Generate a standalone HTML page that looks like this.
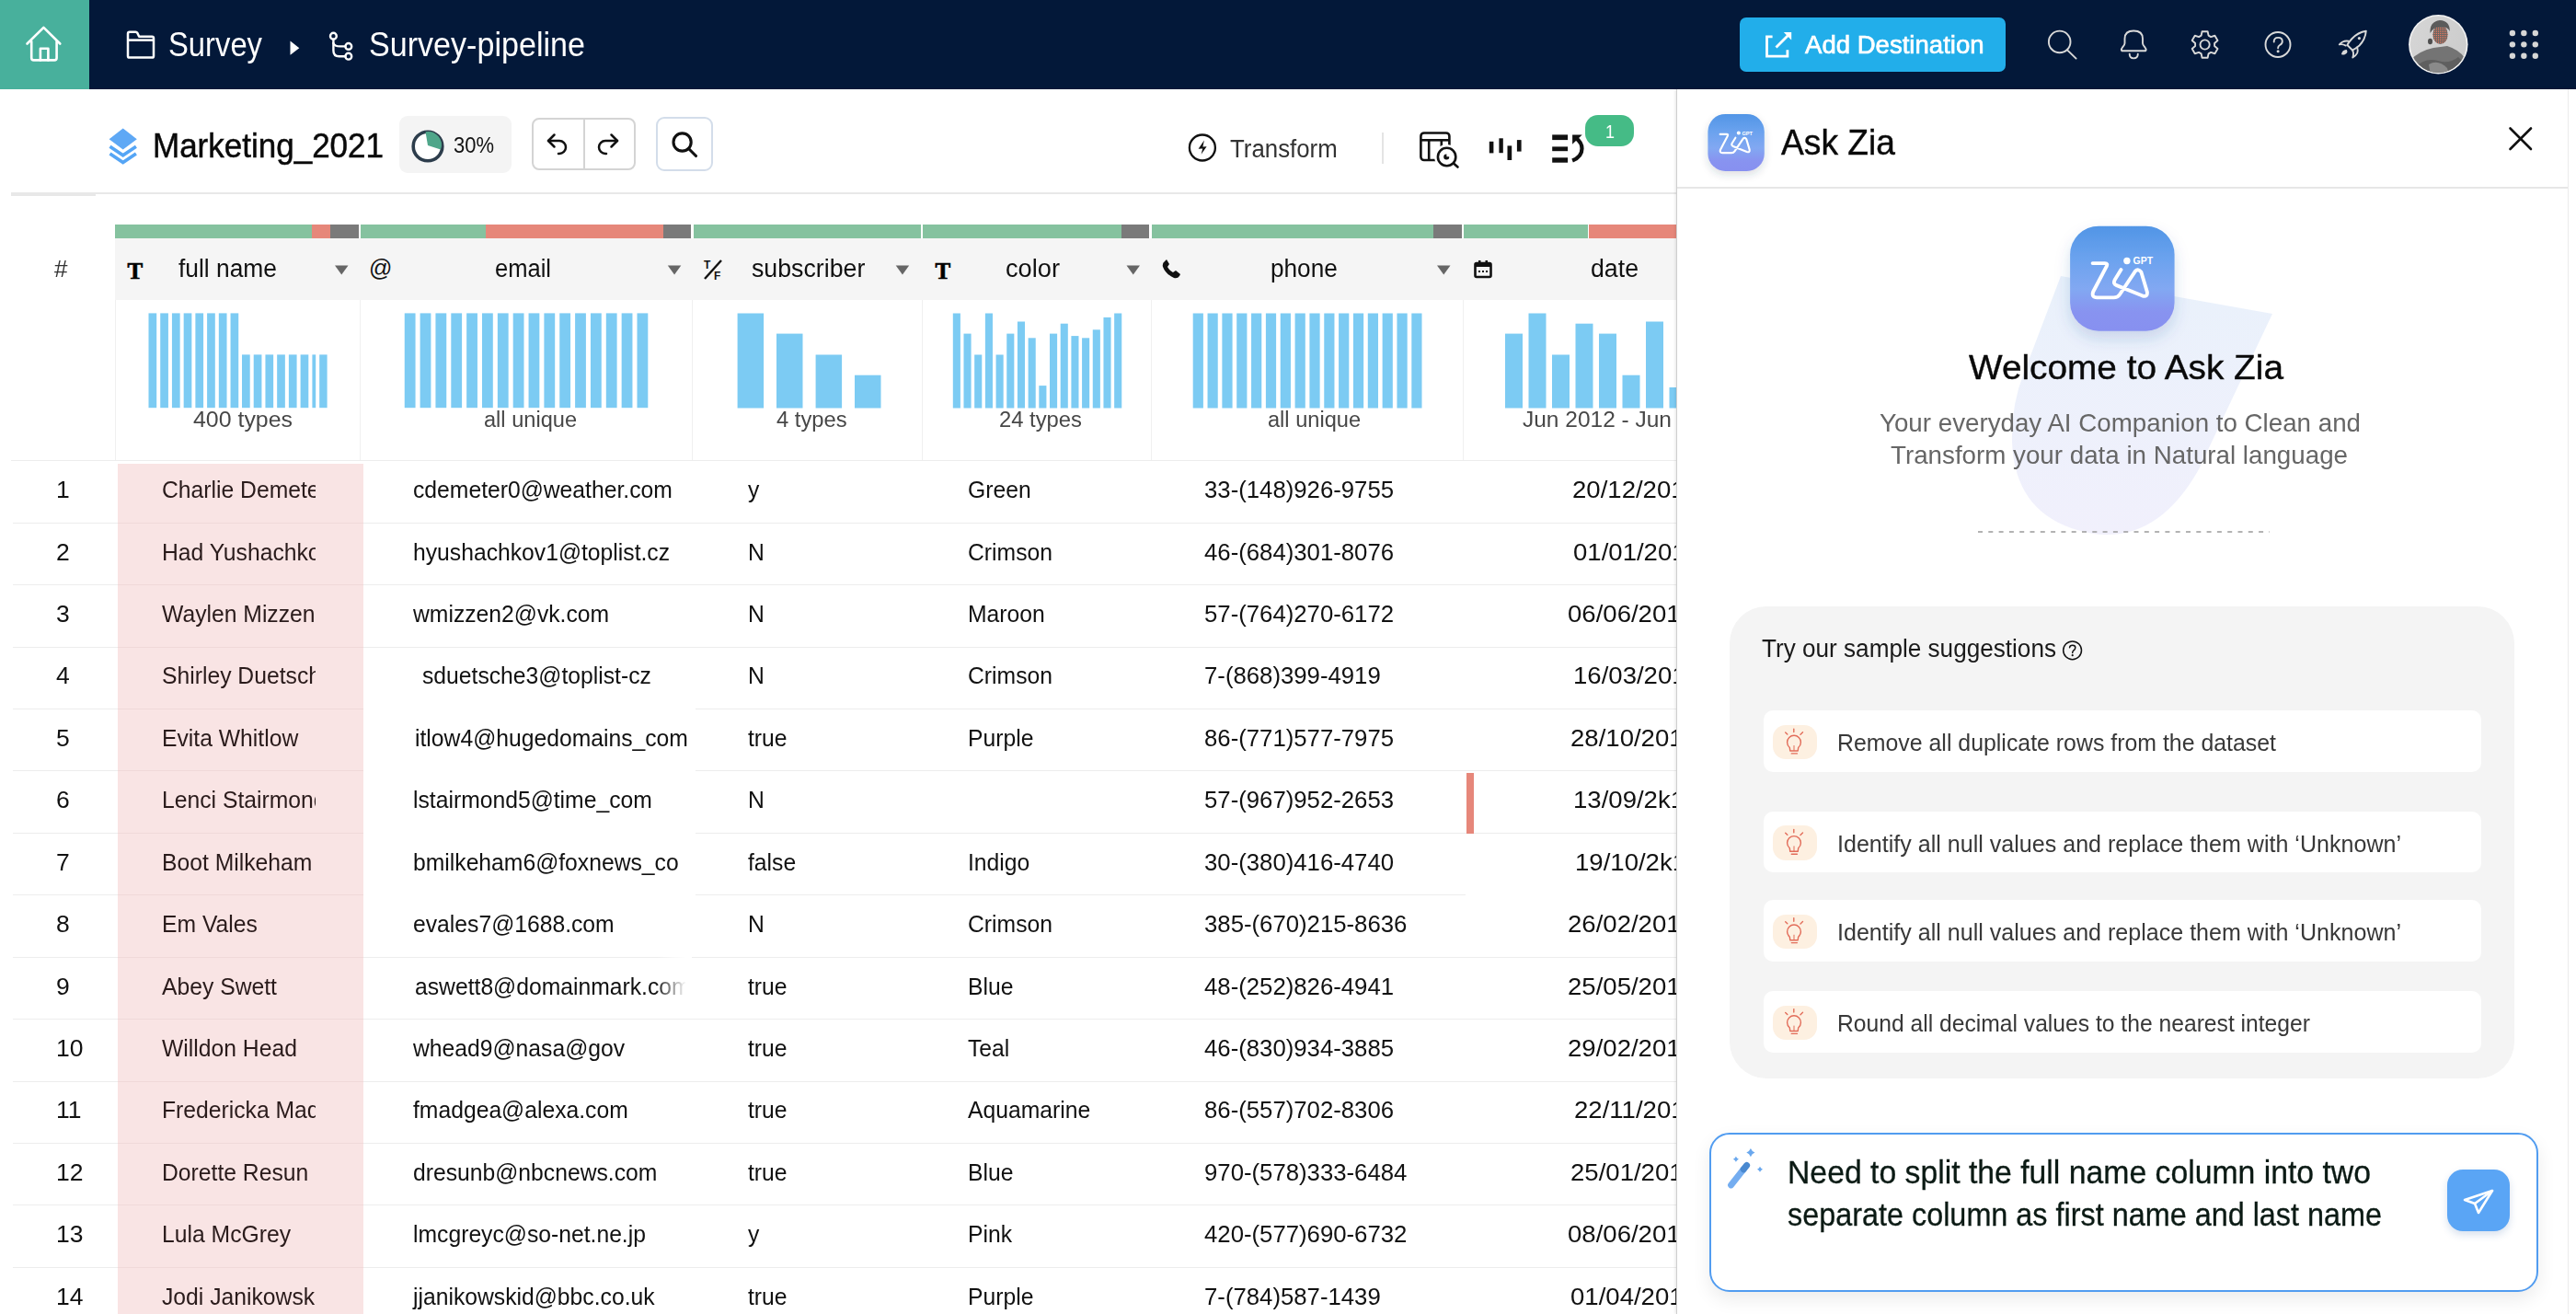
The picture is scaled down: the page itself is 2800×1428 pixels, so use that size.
<!DOCTYPE html>
<html><head><meta charset="utf-8"><style>
html,body{margin:0;padding:0;width:2800px;height:1428px;overflow:hidden;background:#fff;font-family:"Liberation Sans", sans-serif;}
.t{position:absolute;white-space:nowrap;}
.r{position:absolute;}
svg{position:absolute;overflow:visible;}
</style></head><body>
<div class="r" style="left:0px;top:0px;width:2800px;height:97px;background:#031839;"></div>
<div class="r" style="left:0px;top:0px;width:97px;height:97px;background:#48b09c;"></div>
<svg style="left:0;top:0" width="97" height="97"><g fill="none" stroke="#fff" stroke-width="2.6" stroke-linejoin="round" stroke-linecap="round">
<path d="M29.5 47.5 L47.4 29.8 L65.3 47.5"/><path d="M34.2 45 V63 Q34.2 65.4 36.6 65.4 H59.2 Q61.6 65.4 61.6 63 V45"/><path d="M43.9 65.4 V52.8 H52.4 V65.4"/></g></svg>
<svg style="left:0;top:0" width="200" height="97"><g fill="none" stroke="#fff" stroke-width="2.5" stroke-linejoin="round">
<path d="M139 61 V36.5 Q139 34.8 140.8 34.8 H147.5 Q148.6 34.8 149.3 35.8 L151.2 39.8 H165.2 Q167 39.8 167 41.6 V61 Q167 62.6 165.2 62.6 H140.8 Q139 62.6 139 61 Z"/><path d="M139 43.6 H167"/></g></svg>
<div id="t0" class="t" style="left:183.4px;top:31.30px;font-size:36.5px;line-height:36.5px;color:#fff;font-weight:400;transform:scaleX(0.8978);transform-origin:0 0;">Survey</div>
<svg style="left:0;top:0" width="400" height="97"><path d="M315.5 44.6 L325.3 52.2 L315.5 59.8 Z" fill="#fff"/></svg>
<svg style="left:0;top:0" width="400" height="97"><g fill="none" stroke="#fff" stroke-width="2.4" stroke-linecap="round">
<circle cx="362.4" cy="39.2" r="3.4"/><circle cx="378.8" cy="50.4" r="3.4"/><circle cx="378.8" cy="61.2" r="3.4"/>
<path d="M362.4 42.6 V55 Q362.4 61.2 368.6 61.2 H375.4"/><path d="M362.4 47 Q363.5 50.4 370 50.4 H375.4"/></g></svg>
<div id="t1" class="t" style="left:400.5px;top:30.90px;font-size:36.5px;line-height:36.5px;color:#fff;font-weight:400;transform:scaleX(0.9340);transform-origin:0 0;">Survey-pipeline</div>
<div class="r" style="left:1891.2px;top:19px;width:288.5px;height:58.5px;background:#22aeea;border-radius:7px;"></div>
<svg style="left:0;top:0" width="2000" height="97"><g fill="none" stroke="#fff" stroke-width="2.8" stroke-linecap="butt">
<path d="M1926.6 39.8 H1920.5 V61.2 H1942.9 V54.3"/><path d="M1930.5 51.6 L1943.5 38.5"/></g><path d="M1938.8 35 L1947.2 35 L1947.2 43.4 Z" fill="#fff"/></svg>
<div id="t2" class="t" style="left:1961.8px;top:34.23px;font-size:28.2px;line-height:28.2px;color:#fff;font-weight:400;transform:scaleX(0.9778);transform-origin:0 0;-webkit-text-stroke:0.7px #fff;">Add Destination</div>
<svg style="left:0;top:0" width="2800" height="97"><g fill="none" stroke="#d9d9d9" stroke-width="1.9" stroke-linecap="round" stroke-linejoin="round">
<circle cx="2238.7" cy="45.4" r="11.8"/><path d="M2247.3 54.6 L2256.6 63.6"/>
<path d="M2309.5 47 V42 Q2309.5 33.5 2319.2 33.5 Q2329 33.5 2329 42 V47 Q2329 49 2331.5 51.5 Q2333.5 53.8 2332 55.3 H2306.5 Q2305 53.8 2307 51.5 Q2309.5 49 2309.5 47 Z"/><path d="M2314.7 58.6 Q2314.7 63.4 2319.2 63.4 Q2323.8 63.4 2323.8 58.6"/>
<path d="M2392.63 38.67 L2393.56 34.22 L2399.64 34.22 L2400.57 38.67 L2403.13 40.15 L2407.45 38.73 L2410.49 43.99 L2407.10 47.02 L2407.10 49.98 L2410.49 53.01 L2407.45 58.27 L2403.13 56.85 L2400.57 58.33 L2399.64 62.78 L2393.56 62.78 L2392.63 58.33 L2390.07 56.85 L2385.75 58.27 L2382.71 53.01 L2386.10 49.98 L2386.10 47.02 L2382.71 43.99 L2385.75 38.73 L2390.07 40.15 Z"/><circle cx="2396.6" cy="48.5" r="5.1"/>
<circle cx="2476" cy="48.5" r="13.5"/><path d="M2471.7 45.5 Q2471.5 40.9 2476.2 40.9 Q2480.8 40.9 2480.8 45 Q2480.8 47.6 2478 49 Q2476.1 50 2476.1 52.2"/>
<path d="M2571.8 33.7 Q2563 35 2556.5 42 Q2552.5 46.5 2551.4 49 L2557 54.5 Q2560 53.3 2564.5 49.5 Q2571 43 2571.8 33.7 Z"/><path d="M2553 44.8 Q2549.5 44 2546.3 45.5 Q2543.5 47.2 2542.8 48.4 Q2546 47.5 2549.8 49.6"/><path d="M2557 54.5 Q2559 58 2557.3 62.5 Q2560.7 60.5 2562.2 57.6 Q2563.3 55.2 2562.2 51.5"/><path d="M2550.2 55 Q2546.8 55.5 2546 58.6 Q2549.3 58.8 2550.6 56"/>
</g><circle cx="2476.1" cy="55.8" r="1.5" fill="#d9d9d9"/><circle cx="2564.4" cy="41.6" r="1.6" fill="#d9d9d9"/></svg>
<svg style="left:0;top:0" width="2800" height="97"><defs><clipPath id="av"><circle cx="2650.3" cy="48.2" r="30.6"/></clipPath>
<linearGradient id="avb" x1="0" y1="0" x2="1" y2="0.3"><stop offset="0" stop-color="#d6d6d6"/><stop offset="1" stop-color="#cdcdcd"/></linearGradient>
<pattern id="dots" width="2" height="2" patternUnits="userSpaceOnUse"><rect width="2" height="2" fill="#6e6663"/><rect width="1" height="1" fill="#f07a5e"/></pattern></defs>
<circle cx="2650.3" cy="48.2" r="32.2" fill="#f4f4f4"/>
<g clip-path="url(#av)"><rect x="2618" y="16" width="65" height="65" fill="url(#avb)"/>
<path d="M2619 66 Q2630 55 2645 52 L2660 50 Q2673 54 2679 63 L2684 82 L2619 82 Z" fill="#747474"/>
<path d="M2624 74 Q2636 62 2650 66 Q2662 70 2672 62 L2680 70 L2680 82 L2622 82 Z" fill="#5f5f5f"/>
<path d="M2640 70 Q2650 64 2660 74 L2662 82 L2642 82 Z" fill="#8a8a8a"/>
<ellipse cx="2652.5" cy="37.5" rx="8.2" ry="10.5" fill="url(#dots)"/>
<path d="M2641.5 36 Q2640.5 23.5 2652 22 Q2663 22.5 2662.8 34 Q2660 28.5 2652 29 Q2645 29.5 2641.5 36 Z" fill="#5b5b5b"/>
<ellipse cx="2641.5" cy="45" rx="2.5" ry="3.2" fill="#4e4e4e"/>
</g></svg>
<svg style="left:0;top:0" width="2800" height="97"><circle cx="2730.9" cy="36.0" r="3.2" fill="#d6d6d6"/><circle cx="2730.9" cy="48.35" r="3.2" fill="#d6d6d6"/><circle cx="2730.9" cy="60.7" r="3.2" fill="#d6d6d6"/><circle cx="2743.35" cy="36.0" r="3.2" fill="#d6d6d6"/><circle cx="2743.35" cy="48.35" r="3.2" fill="#d6d6d6"/><circle cx="2743.35" cy="60.7" r="3.2" fill="#d6d6d6"/><circle cx="2755.8" cy="36.0" r="3.2" fill="#d6d6d6"/><circle cx="2755.8" cy="48.35" r="3.2" fill="#d6d6d6"/><circle cx="2755.8" cy="60.7" r="3.2" fill="#d6d6d6"/></svg>
<div class="r" style="left:12px;top:209px;width:1810px;height:2px;background:#e8e8e8;"></div>
<div class="r" style="left:12px;top:209px;width:92.4px;height:4px;background:#e8e8e8;"></div>
<svg style="left:0;top:0" width="200" height="210"><path d="M133.7 139.6 L148.8 151.2 L133.7 162.6 L118.6 151.2 Z" fill="#5ea8f5"/>
<g fill="none" stroke="#55a5f5" stroke-width="3.6" stroke-linejoin="miter"><path d="M119.5 159.2 L133.7 168.8 L147.9 159.2"/><path d="M119.5 167 L133.7 176.6 L147.9 167"/></g></svg>
<div id="t3" class="t" style="left:166px;top:141.30px;font-size:36.5px;line-height:36.5px;color:#0a0a0a;font-weight:400;transform:scaleX(0.9589);transform-origin:0 0;-webkit-text-stroke:0.5px #0a0a0a;">Marketing_2021</div>
<div class="r" style="left:434px;top:126px;width:122px;height:62px;background:#f4f4f4;border-radius:9px;"></div>
<svg style="left:0;top:0" width="600" height="210"><circle cx="465" cy="159" r="15.8" fill="#fff" stroke="#2d3d4c" stroke-width="3.6"/>
<path d="M465 158 L462.5 143.3 A14.5 14.5 0 0 1 479 162.5 Z" fill="#4fa68a"/></svg>
<div id="t4" class="t" style="left:493px;top:147.03px;font-size:23px;line-height:23px;color:#111;font-weight:400;transform:scaleX(0.9555);transform-origin:0 0;">30%</div>
<div class="r" style="left:578px;top:128.4px;width:112.6px;height:57px;background:#fff;border:2px solid #d4d4d4;border-radius:8px;box-sizing:border-box;"></div>
<div class="r" style="left:633.6px;top:128.4px;width:2px;height:57px;background:#d4d4d4;"></div>
<svg style="left:0;top:0" width="800" height="210"><g fill="none" stroke="#111" stroke-width="2.5" stroke-linecap="round" stroke-linejoin="round">
<path d="M596 153 H608 A7 7 0 0 1 608 167 H607"/><path d="M602.5 146.5 L596 153 L602.5 159.5"/>
<path d="M671 153 H658 A7 7 0 0 0 658 167 H659"/><path d="M664.5 146.5 L671 153 L664.5 159.5"/>
</g></svg>
<div class="r" style="left:712.8px;top:127.4px;width:62.7px;height:59px;background:#fff;border:2px solid #d3ddea;border-radius:9px;box-sizing:border-box;"></div>
<svg style="left:0;top:0" width="800" height="210"><g fill="none" stroke="#111" stroke-width="3.1" stroke-linecap="round">
<circle cx="741.6" cy="154.5" r="9.6"/><path d="M748.5 161.5 L756.5 169.5"/></g></svg>
<svg style="left:0;top:0" width="1400" height="210"><circle cx="1306.9" cy="160.5" r="14" fill="none" stroke="#111" stroke-width="2.3"/>
<path d="M1308.9 152.5 L1302.6 161.7 L1307.2 161.4 L1305.6 167.8 L1311.6 159.3 L1307.4 159.5 Z" fill="#111"/></svg>
<div id="t5" class="t" style="left:1336.5px;top:148.64px;font-size:27px;line-height:27px;color:#333;font-weight:400;transform:scaleX(0.9564);transform-origin:0 0;">Transform</div>
<div class="r" style="left:1502.3px;top:144.3px;width:1.4px;height:33.3px;background:#e4e4e4;"></div>
<svg style="left:0;top:0" width="1800" height="210"><defs><mask id="tm"><rect x="1530" y="130" width="70" height="60" fill="#fff"/><circle cx="1572.6" cy="170.5" r="13.5" fill="#000"/></mask></defs>
<g fill="none" stroke="#111" stroke-width="2.6" stroke-linejoin="round" mask="url(#tm)">
<rect x="1544.4" y="144.5" width="31" height="29.5" rx="3.5"/><path d="M1544.4 152.3 H1575.4"/><path d="M1553.2 152.3 V174"/><path d="M1566.8 152.3 V175"/></g>
<g fill="none" stroke="#111" stroke-width="2.6" stroke-linecap="round"><circle cx="1572.6" cy="170.5" r="9.7"/><path d="M1580.5 178 L1584.5 181.5"/></g>
<path d="M1572.4 167.5 A3 3 0 1 0 1575.2 170.2 L1572.4 170.2 Z" fill="#111"/>
<g fill="#111"><rect x="1618.8" y="153.8" width="4.6" height="12.6"/><rect x="1629.4" y="150.3" width="4.4" height="15.9"/><rect x="1638.5" y="158.4" width="4.7" height="15.6"/><rect x="1648.9" y="152.1" width="4.7" height="12.5"/></g>
<g fill="#111"><rect x="1687.2" y="146.4" width="16.9" height="5.7"/><rect x="1687.2" y="159.4" width="16.9" height="4.8"/><rect x="1687.2" y="171.3" width="16.9" height="5.4"/></g>
<path d="M1709.1 174.5 Q1719.5 170.5 1719.5 161.5 Q1719.5 155 1713.5 150.5" fill="none" stroke="#111" stroke-width="4.2"/><path d="M1709.1 146.4 L1719.7 146.4 L1709.1 156.8 Z" fill="#111"/>
</svg>
<div class="r" style="left:1723.3px;top:124.5px;width:53px;height:34px;background:#45bb86;border-radius:14px;"></div>
<div id="t6" class="t" style="left:1745px;top:131.52px;font-size:21px;line-height:21px;color:#fff;font-weight:400;transform:scaleX(0.8556);transform-origin:0 0;">1</div>
<div class="r" style="left:125px;top:244px;width:214px;height:15px;background:#85c29f;"></div>
<div class="r" style="left:339px;top:244px;width:20.3px;height:15px;background:#e6877a;"></div>
<div class="r" style="left:359.3px;top:244px;width:30.7px;height:15px;background:#7a7a7a;"></div>
<div class="r" style="left:392px;top:244px;width:136px;height:15px;background:#85c29f;"></div>
<div class="r" style="left:528px;top:244px;width:193.4px;height:15px;background:#e6877a;"></div>
<div class="r" style="left:721.4px;top:244px;width:30.1px;height:15px;background:#7a7a7a;"></div>
<div class="r" style="left:754px;top:244px;width:246.5px;height:15px;background:#85c29f;"></div>
<div class="r" style="left:1003px;top:244px;width:215.5px;height:15px;background:#85c29f;"></div>
<div class="r" style="left:1218.5px;top:244px;width:30.9px;height:15px;background:#7a7a7a;"></div>
<div class="r" style="left:1251.7px;top:244px;width:306.0px;height:15px;background:#85c29f;"></div>
<div class="r" style="left:1557.7px;top:244px;width:31.0px;height:15px;background:#7a7a7a;"></div>
<div class="r" style="left:1590.6px;top:244px;width:135.9px;height:15px;background:#85c29f;"></div>
<div class="r" style="left:1726.5px;top:244px;width:95.5px;height:15px;background:#e6877a;"></div>
<div class="r" style="left:125px;top:259px;width:1697px;height:67px;background:#f5f5f5;"></div>
<div id="t7" class="t" style="left:59px;top:278.99px;font-size:26px;line-height:26px;color:#333;font-weight:400;transform:scaleX(1.0022);transform-origin:0 0;">#</div>
<div id="t8" class="t" style="left:194px;top:278.94px;font-size:27px;line-height:27px;color:#111;font-weight:400;transform:scaleX(0.9766);transform-origin:0 0;">full name</div>
<div id="t9" class="t" style="left:538px;top:278.94px;font-size:27px;line-height:27px;color:#111;font-weight:400;transform:scaleX(0.9453);transform-origin:0 0;">email</div>
<div id="t10" class="t" style="left:816.7px;top:278.94px;font-size:27px;line-height:27px;color:#111;font-weight:400;transform:scaleX(0.9900);transform-origin:0 0;">subscriber</div>
<div id="t11" class="t" style="left:1093px;top:278.94px;font-size:27px;line-height:27px;color:#111;font-weight:400;transform:scaleX(1.0080);transform-origin:0 0;">color</div>
<div id="t12" class="t" style="left:1380.7px;top:278.94px;font-size:27px;line-height:27px;color:#111;font-weight:400;transform:scaleX(0.9695);transform-origin:0 0;">phone</div>
<div id="t13" class="t" style="left:1729px;top:278.94px;font-size:27px;line-height:27px;color:#111;font-weight:400;transform:scaleX(0.9893);transform-origin:0 0;">date</div>
<svg style="left:0;top:0" width="2000" height="400"><path d="M364 288.5 L378.5 288.5 L371.25 298.5 Z" fill="#666"/><path d="M725.8 288.5 L740.3 288.5 L733.05 298.5 Z" fill="#666"/><path d="M973.7 288.5 L988.2 288.5 L980.95 298.5 Z" fill="#666"/><path d="M1224.5 288.5 L1239.0 288.5 L1231.75 298.5 Z" fill="#666"/><path d="M1562 288.5 L1576.5 288.5 L1569.25 298.5 Z" fill="#666"/></svg>
<svg style="left:0;top:0" width="2000" height="400">
<text x="138.5" y="302.5" font-family="Liberation Serif" font-weight="700" font-size="25" fill="#000" stroke="#000" stroke-width="0.7">T</text>
<text x="1016.5" y="302.5" font-family="Liberation Serif" font-weight="700" font-size="25" fill="#000" stroke="#000" stroke-width="0.7">T</text>
<text x="401" y="300" font-family="Liberation Sans" font-size="25" fill="#111">@</text>
<g fill="none" stroke="#111" stroke-width="2.4"><path d="M766 303 L784 283"/></g>
<text x="765" y="292" font-family="Liberation Sans" font-weight="700" font-size="12" fill="#111">T</text>
<text x="776" y="304" font-family="Liberation Sans" font-weight="700" font-size="12" fill="#111">F</text>
<path d="M1266 284 Q1263 286 1264 290 Q1267 298 1276 302 Q1280 303 1282 300 L1283 298 L1278 294 L1275 296 Q1271 294 1269 290 L1271 287 L1268 282 Z" fill="#111"/>
<rect x="1603.5" y="286" width="17" height="15" rx="1.5" fill="none" stroke="#111" stroke-width="2.6"/>
<rect x="1603" y="286" width="18" height="4" fill="#111"/><rect x="1607" y="283" width="2.5" height="5" fill="#111"/><rect x="1614.5" y="283" width="2.5" height="5" fill="#111"/>
<rect x="1607" y="294" width="2" height="2" fill="#111"/><rect x="1611" y="294" width="2" height="2" fill="#111"/><rect x="1615" y="294" width="2" height="2" fill="#111"/>
</svg>
<div class="r" style="left:125px;top:326px;width:1.2px;height:174px;background:#f0f0f0;"></div>
<div class="r" style="left:391px;top:326px;width:1.2px;height:174px;background:#f0f0f0;"></div>
<div class="r" style="left:752px;top:326px;width:1.2px;height:174px;background:#f0f0f0;"></div>
<div class="r" style="left:1001.5px;top:326px;width:1.2px;height:174px;background:#f0f0f0;"></div>
<div class="r" style="left:1250.5px;top:326px;width:1.2px;height:174px;background:#f0f0f0;"></div>
<div class="r" style="left:1589.5px;top:326px;width:1.2px;height:174px;background:#f0f0f0;"></div>
<svg style="left:0;top:0" width="1822" height="500"><rect x="161.5" y="340.4" width="8.7" height="102.8" fill="#7ccbf3"/><rect x="174.22" y="340.4" width="8.7" height="102.8" fill="#7ccbf3"/><rect x="186.94" y="340.4" width="8.7" height="102.8" fill="#7ccbf3"/><rect x="199.66" y="340.4" width="8.7" height="102.8" fill="#7ccbf3"/><rect x="212.38" y="340.4" width="8.7" height="102.8" fill="#7ccbf3"/><rect x="225.1" y="340.4" width="8.7" height="102.8" fill="#7ccbf3"/><rect x="237.82" y="340.4" width="8.7" height="102.8" fill="#7ccbf3"/><rect x="250.54000000000002" y="340.4" width="8.7" height="102.8" fill="#7ccbf3"/><rect x="263.0" y="385.4" width="8.7" height="57.8" fill="#7ccbf3"/><rect x="275.72" y="385.4" width="8.7" height="57.8" fill="#7ccbf3"/><rect x="288.44" y="385.4" width="8.7" height="57.8" fill="#7ccbf3"/><rect x="301.16" y="385.4" width="8.7" height="57.8" fill="#7ccbf3"/><rect x="313.88" y="385.4" width="8.7" height="57.8" fill="#7ccbf3"/><rect x="326.6" y="385.4" width="8.7" height="57.8" fill="#7ccbf3"/><rect x="339.4" y="385.4" width="3.8" height="57.8" fill="#7ccbf3"/><rect x="347.2" y="385.4" width="8.4" height="57.8" fill="#7ccbf3"/><rect x="439.75" y="340.4" width="11.8" height="102.8" fill="#7ccbf3"/><rect x="456.6" y="340.4" width="11.8" height="102.8" fill="#7ccbf3"/><rect x="473.45" y="340.4" width="11.8" height="102.8" fill="#7ccbf3"/><rect x="490.3" y="340.4" width="11.8" height="102.8" fill="#7ccbf3"/><rect x="507.15" y="340.4" width="11.8" height="102.8" fill="#7ccbf3"/><rect x="524.0" y="340.4" width="11.8" height="102.8" fill="#7ccbf3"/><rect x="540.85" y="340.4" width="11.8" height="102.8" fill="#7ccbf3"/><rect x="557.7" y="340.4" width="11.8" height="102.8" fill="#7ccbf3"/><rect x="574.55" y="340.4" width="11.8" height="102.8" fill="#7ccbf3"/><rect x="591.4" y="340.4" width="11.8" height="102.8" fill="#7ccbf3"/><rect x="608.25" y="340.4" width="11.8" height="102.8" fill="#7ccbf3"/><rect x="625.1" y="340.4" width="11.8" height="102.8" fill="#7ccbf3"/><rect x="641.95" y="340.4" width="11.8" height="102.8" fill="#7ccbf3"/><rect x="658.8" y="340.4" width="11.8" height="102.8" fill="#7ccbf3"/><rect x="675.6500000000001" y="340.4" width="11.8" height="102.8" fill="#7ccbf3"/><rect x="692.5" y="340.4" width="11.8" height="102.8" fill="#7ccbf3"/><rect x="801.6" y="340.5" width="28.5" height="103.0" fill="#7ccbf3"/><rect x="844" y="362.6" width="28.5" height="80.89999999999998" fill="#7ccbf3"/><rect x="886.6" y="385.5" width="28.5" height="58.0" fill="#7ccbf3"/><rect x="929" y="407.7" width="28.5" height="35.80000000000001" fill="#7ccbf3"/><rect x="1035.80" y="340.5" width="8.1" height="103.0" fill="#7ccbf3"/><rect x="1047.49" y="362.6" width="8.1" height="80.9" fill="#7ccbf3"/><rect x="1059.18" y="385.5" width="8.1" height="58.0" fill="#7ccbf3"/><rect x="1070.87" y="340.5" width="8.1" height="103.0" fill="#7ccbf3"/><rect x="1082.56" y="385.5" width="8.1" height="58.0" fill="#7ccbf3"/><rect x="1094.25" y="362.6" width="8.1" height="80.9" fill="#7ccbf3"/><rect x="1105.94" y="349.5" width="8.1" height="94.0" fill="#7ccbf3"/><rect x="1117.63" y="367.3" width="8.1" height="76.2" fill="#7ccbf3"/><rect x="1129.32" y="419.1" width="8.1" height="24.4" fill="#7ccbf3"/><rect x="1141.01" y="362.6" width="8.1" height="80.9" fill="#7ccbf3"/><rect x="1152.70" y="351.7" width="8.1" height="91.8" fill="#7ccbf3"/><rect x="1164.39" y="365.1" width="8.1" height="78.4" fill="#7ccbf3"/><rect x="1176.08" y="367.3" width="8.1" height="76.2" fill="#7ccbf3"/><rect x="1187.77" y="358.3" width="8.1" height="85.2" fill="#7ccbf3"/><rect x="1199.46" y="344.9" width="8.1" height="98.6" fill="#7ccbf3"/><rect x="1211.15" y="340.5" width="8.1" height="103.0" fill="#7ccbf3"/><rect x="1296.70" y="340.5" width="11.2" height="103" fill="#7ccbf3"/><rect x="1312.54" y="340.5" width="11.2" height="103" fill="#7ccbf3"/><rect x="1328.38" y="340.5" width="11.2" height="103" fill="#7ccbf3"/><rect x="1344.22" y="340.5" width="11.2" height="103" fill="#7ccbf3"/><rect x="1360.06" y="340.5" width="11.2" height="103" fill="#7ccbf3"/><rect x="1375.90" y="340.5" width="11.2" height="103" fill="#7ccbf3"/><rect x="1391.74" y="340.5" width="11.2" height="103" fill="#7ccbf3"/><rect x="1407.58" y="340.5" width="11.2" height="103" fill="#7ccbf3"/><rect x="1423.42" y="340.5" width="11.2" height="103" fill="#7ccbf3"/><rect x="1439.26" y="340.5" width="11.2" height="103" fill="#7ccbf3"/><rect x="1455.10" y="340.5" width="11.2" height="103" fill="#7ccbf3"/><rect x="1470.94" y="340.5" width="11.2" height="103" fill="#7ccbf3"/><rect x="1486.78" y="340.5" width="11.2" height="103" fill="#7ccbf3"/><rect x="1502.62" y="340.5" width="11.2" height="103" fill="#7ccbf3"/><rect x="1518.46" y="340.5" width="11.2" height="103" fill="#7ccbf3"/><rect x="1534.30" y="340.5" width="11.2" height="103" fill="#7ccbf3"/><rect x="1636.00" y="362.6" width="19" height="80.9" fill="#7ccbf3"/><rect x="1661.50" y="340.5" width="19" height="103.0" fill="#7ccbf3"/><rect x="1687.00" y="385.5" width="19" height="58.0" fill="#7ccbf3"/><rect x="1712.50" y="351.7" width="19" height="91.8" fill="#7ccbf3"/><rect x="1738.00" y="362.6" width="19" height="80.9" fill="#7ccbf3"/><rect x="1763.50" y="407.7" width="19" height="35.8" fill="#7ccbf3"/><rect x="1789.00" y="349.5" width="19" height="94.0" fill="#7ccbf3"/><rect x="1814.50" y="421" width="19" height="22.5" fill="#7ccbf3"/></svg>
<div id="t14" class="t" style="left:209.6px;top:445.13px;font-size:23px;line-height:23px;color:#474747;font-weight:400;transform:scaleX(1.0827);transform-origin:0 0;">400 types</div>
<div id="t15" class="t" style="left:525.8px;top:445.13px;font-size:23px;line-height:23px;color:#474747;font-weight:400;transform:scaleX(1.0257);transform-origin:0 0;">all unique</div>
<div id="t16" class="t" style="left:843.5px;top:445.13px;font-size:23px;line-height:23px;color:#474747;font-weight:400;transform:scaleX(1.0343);transform-origin:0 0;">4 types</div>
<div id="t17" class="t" style="left:1085.7px;top:445.13px;font-size:23px;line-height:23px;color:#474747;font-weight:400;transform:scaleX(1.0350);transform-origin:0 0;">24 types</div>
<div id="t18" class="t" style="left:1377.6px;top:445.13px;font-size:23px;line-height:23px;color:#474747;font-weight:400;transform:scaleX(1.0257);transform-origin:0 0;">all unique</div>
<div style="position:absolute;left:1590px;top:425.13px;width:228px;height:63px;overflow:hidden"><div id="t19" class="t" style="left:65px;top:20px;font-size:23px;line-height:23px;color:#474747;font-weight:400;transform:scaleX(1.0646);transform-origin:0 0;">Jun 2012 - Jun</div></div>
<div class="r" style="left:12px;top:500px;width:1810px;height:1.2px;background:#ececec;"></div>
<div class="r" style="left:128px;top:504px;width:267px;height:924px;background:#f9e4e4;"></div>
<div class="r" style="left:14px;top:568px;width:1808px;height:1px;background:#ededed;"></div>
<div class="r" style="left:128px;top:568px;width:267px;height:1px;background:#f0d9d9;"></div>
<div id="t20" class="t" style="left:61px;top:519.09px;font-size:26px;line-height:26px;color:#111;font-weight:400;transform:scaleX(1.02);transform-origin:0 0;">1</div>
<div style="position:absolute;left:128px;top:499.09px;width:215px;height:66px;overflow:hidden"><div id="t21" class="t" style="left:48px;top:20px;font-size:26px;line-height:26px;color:#2a1b1b;font-weight:400;transform:scaleX(0.95);transform-origin:0 0;">Charlie Demeter</div></div>
<div style="position:absolute;left:392px;top:499.09px;width:353px;height:66px;overflow:hidden"><div id="t22" class="t" style="left:57.39999999999998px;top:20px;font-size:26px;line-height:26px;color:#111;font-weight:400;transform:scaleX(0.95);transform-origin:0 0;">cdemeter0@weather.com</div></div>
<div id="t23" class="t" style="left:812.9px;top:519.09px;font-size:26px;line-height:26px;color:#111;font-weight:400;transform:scaleX(0.95);transform-origin:0 0;">y</div>
<div id="t24" class="t" style="left:1051.8px;top:519.09px;font-size:26px;line-height:26px;color:#111;font-weight:400;transform:scaleX(0.95);transform-origin:0 0;">Green</div>
<div id="t25" class="t" style="left:1308.5px;top:519.09px;font-size:26px;line-height:26px;color:#111;font-weight:400;transform:scaleX(0.99);transform-origin:0 0;">33-(148)926-9755</div>
<div style="position:absolute;left:1592px;top:499.09px;width:230px;height:66px;overflow:hidden"><div id="t26" class="t" style="left:116.5px;top:20px;font-size:26px;line-height:26px;color:#111;font-weight:400;transform:scaleX(1.06);transform-origin:0 0;">20/12/2015</div></div>
<div class="r" style="left:14px;top:635px;width:1808px;height:1px;background:#ededed;"></div>
<div class="r" style="left:128px;top:635px;width:267px;height:1px;background:#f0d9d9;"></div>
<div id="t27" class="t" style="left:61px;top:586.52px;font-size:26px;line-height:26px;color:#111;font-weight:400;transform:scaleX(1.02);transform-origin:0 0;">2</div>
<div style="position:absolute;left:128px;top:566.52px;width:215px;height:66px;overflow:hidden"><div id="t28" class="t" style="left:48px;top:20px;font-size:26px;line-height:26px;color:#2a1b1b;font-weight:400;transform:scaleX(0.95);transform-origin:0 0;">Had Yushachkov</div></div>
<div style="position:absolute;left:392px;top:566.52px;width:353px;height:66px;overflow:hidden"><div id="t29" class="t" style="left:57.39999999999998px;top:20px;font-size:26px;line-height:26px;color:#111;font-weight:400;transform:scaleX(0.95);transform-origin:0 0;">hyushachkov1@toplist.cz</div></div>
<div id="t30" class="t" style="left:812.9px;top:586.52px;font-size:26px;line-height:26px;color:#111;font-weight:400;transform:scaleX(0.95);transform-origin:0 0;">N</div>
<div id="t31" class="t" style="left:1051.8px;top:586.52px;font-size:26px;line-height:26px;color:#111;font-weight:400;transform:scaleX(0.95);transform-origin:0 0;">Crimson</div>
<div id="t32" class="t" style="left:1308.5px;top:586.52px;font-size:26px;line-height:26px;color:#111;font-weight:400;transform:scaleX(0.99);transform-origin:0 0;">46-(684)301-8076</div>
<div style="position:absolute;left:1592px;top:566.52px;width:230px;height:66px;overflow:hidden"><div id="t33" class="t" style="left:118.20000000000005px;top:20px;font-size:26px;line-height:26px;color:#111;font-weight:400;transform:scaleX(1.06);transform-origin:0 0;">01/01/2015</div></div>
<div class="r" style="left:14px;top:703px;width:1808px;height:1px;background:#ededed;"></div>
<div class="r" style="left:128px;top:703px;width:267px;height:1px;background:#f0d9d9;"></div>
<div id="t34" class="t" style="left:61px;top:653.95px;font-size:26px;line-height:26px;color:#111;font-weight:400;transform:scaleX(1.02);transform-origin:0 0;">3</div>
<div style="position:absolute;left:128px;top:633.95px;width:215px;height:66px;overflow:hidden"><div id="t35" class="t" style="left:48px;top:20px;font-size:26px;line-height:26px;color:#2a1b1b;font-weight:400;transform:scaleX(0.95);transform-origin:0 0;">Waylen Mizzen</div></div>
<div style="position:absolute;left:392px;top:633.95px;width:353px;height:66px;overflow:hidden"><div id="t36" class="t" style="left:57.39999999999998px;top:20px;font-size:26px;line-height:26px;color:#111;font-weight:400;transform:scaleX(0.95);transform-origin:0 0;">wmizzen2@vk.com</div></div>
<div id="t37" class="t" style="left:812.9px;top:653.95px;font-size:26px;line-height:26px;color:#111;font-weight:400;transform:scaleX(0.95);transform-origin:0 0;">N</div>
<div id="t38" class="t" style="left:1051.8px;top:653.95px;font-size:26px;line-height:26px;color:#111;font-weight:400;transform:scaleX(0.95);transform-origin:0 0;">Maroon</div>
<div id="t39" class="t" style="left:1308.5px;top:653.95px;font-size:26px;line-height:26px;color:#111;font-weight:400;transform:scaleX(0.99);transform-origin:0 0;">57-(764)270-6172</div>
<div style="position:absolute;left:1592px;top:633.95px;width:230px;height:66px;overflow:hidden"><div id="t40" class="t" style="left:112.29999999999995px;top:20px;font-size:26px;line-height:26px;color:#111;font-weight:400;transform:scaleX(1.06);transform-origin:0 0;">06/06/2015</div></div>
<div class="r" style="left:14px;top:770px;width:381px;height:1px;background:#ededed;"></div>
<div class="r" style="left:756px;top:770px;width:1066px;height:1px;background:#ededed;"></div>
<div class="r" style="left:128px;top:770px;width:267px;height:1px;background:#f0d9d9;"></div>
<div id="t41" class="t" style="left:61px;top:721.38px;font-size:26px;line-height:26px;color:#111;font-weight:400;transform:scaleX(1.02);transform-origin:0 0;">4</div>
<div style="position:absolute;left:128px;top:701.38px;width:215px;height:66px;overflow:hidden"><div id="t42" class="t" style="left:48px;top:20px;font-size:26px;line-height:26px;color:#2a1b1b;font-weight:400;transform:scaleX(0.95);transform-origin:0 0;">Shirley Duetsche</div></div>
<div style="position:absolute;left:392px;top:701.38px;width:353px;height:66px;overflow:hidden"><div id="t43" class="t" style="left:67px;top:20px;font-size:26px;line-height:26px;color:#111;font-weight:400;transform:scaleX(0.95);transform-origin:0 0;">sduetsche3@toplist-cz</div></div>
<div id="t44" class="t" style="left:812.9px;top:721.38px;font-size:26px;line-height:26px;color:#111;font-weight:400;transform:scaleX(0.95);transform-origin:0 0;">N</div>
<div id="t45" class="t" style="left:1051.8px;top:721.38px;font-size:26px;line-height:26px;color:#111;font-weight:400;transform:scaleX(0.95);transform-origin:0 0;">Crimson</div>
<div id="t46" class="t" style="left:1308.5px;top:721.38px;font-size:26px;line-height:26px;color:#111;font-weight:400;transform:scaleX(0.99);transform-origin:0 0;">7-(868)399-4919</div>
<div style="position:absolute;left:1592px;top:701.38px;width:230px;height:66px;overflow:hidden"><div id="t47" class="t" style="left:118.20000000000005px;top:20px;font-size:26px;line-height:26px;color:#111;font-weight:400;transform:scaleX(1.06);transform-origin:0 0;">16/03/2015</div></div>
<div class="r" style="left:14px;top:837px;width:381px;height:1px;background:#ededed;"></div>
<div class="r" style="left:756px;top:837px;width:1066px;height:1px;background:#ededed;"></div>
<div class="r" style="left:128px;top:837px;width:267px;height:1px;background:#f0d9d9;"></div>
<div id="t48" class="t" style="left:61px;top:788.81px;font-size:26px;line-height:26px;color:#111;font-weight:400;transform:scaleX(1.02);transform-origin:0 0;">5</div>
<div style="position:absolute;left:128px;top:768.81px;width:215px;height:66px;overflow:hidden"><div id="t49" class="t" style="left:48px;top:20px;font-size:26px;line-height:26px;color:#2a1b1b;font-weight:400;transform:scaleX(0.95);transform-origin:0 0;">Evita Whitlow</div></div>
<div style="position:absolute;left:392px;top:768.81px;width:360px;height:66px;overflow:hidden"><div id="t50" class="t" style="left:58.69999999999999px;top:20px;font-size:26px;line-height:26px;color:#111;font-weight:400;transform:scaleX(0.95);transform-origin:0 0;">itlow4@hugedomains_com</div></div>
<div id="t51" class="t" style="left:812.9px;top:788.81px;font-size:26px;line-height:26px;color:#111;font-weight:400;transform:scaleX(0.95);transform-origin:0 0;">true</div>
<div id="t52" class="t" style="left:1051.8px;top:788.81px;font-size:26px;line-height:26px;color:#111;font-weight:400;transform:scaleX(0.95);transform-origin:0 0;">Purple</div>
<div id="t53" class="t" style="left:1308.5px;top:788.81px;font-size:26px;line-height:26px;color:#111;font-weight:400;transform:scaleX(0.99);transform-origin:0 0;">86-(771)577-7975</div>
<div style="position:absolute;left:1592px;top:768.81px;width:230px;height:66px;overflow:hidden"><div id="t54" class="t" style="left:114.79999999999995px;top:20px;font-size:26px;line-height:26px;color:#111;font-weight:400;transform:scaleX(1.06);transform-origin:0 0;">28/10/2015</div></div>
<div class="r" style="left:14px;top:905px;width:381px;height:1px;background:#ededed;"></div>
<div class="r" style="left:756px;top:905px;width:1066px;height:1px;background:#ededed;"></div>
<div class="r" style="left:128px;top:905px;width:267px;height:1px;background:#f0d9d9;"></div>
<div id="t55" class="t" style="left:61px;top:856.24px;font-size:26px;line-height:26px;color:#111;font-weight:400;transform:scaleX(1.02);transform-origin:0 0;">6</div>
<div style="position:absolute;left:128px;top:836.24px;width:215px;height:66px;overflow:hidden"><div id="t56" class="t" style="left:48px;top:20px;font-size:26px;line-height:26px;color:#2a1b1b;font-weight:400;transform:scaleX(0.95);transform-origin:0 0;">Lenci Stairmond</div></div>
<div style="position:absolute;left:392px;top:836.24px;width:353px;height:66px;overflow:hidden"><div id="t57" class="t" style="left:57px;top:20px;font-size:26px;line-height:26px;color:#111;font-weight:400;transform:scaleX(0.95);transform-origin:0 0;">lstairmond5@time_com</div></div>
<div id="t58" class="t" style="left:812.9px;top:856.24px;font-size:26px;line-height:26px;color:#111;font-weight:400;transform:scaleX(0.95);transform-origin:0 0;">N</div>
<div id="t59" class="t" style="left:1051.8px;top:856.24px;font-size:26px;line-height:26px;color:#111;font-weight:400;transform:scaleX(0.95);transform-origin:0 0;"></div>
<div id="t60" class="t" style="left:1308.5px;top:856.24px;font-size:26px;line-height:26px;color:#111;font-weight:400;transform:scaleX(0.99);transform-origin:0 0;">57-(967)952-2653</div>
<div style="position:absolute;left:1592px;top:836.24px;width:230px;height:66px;overflow:hidden"><div id="t61" class="t" style="left:117.90000000000009px;top:20px;font-size:26px;line-height:26px;color:#111;font-weight:400;transform:scaleX(1.06);transform-origin:0 0;">13/09/2k15</div></div>
<div class="r" style="left:14px;top:972px;width:381px;height:1px;background:#ededed;"></div>
<div class="r" style="left:756px;top:972px;width:837px;height:1px;background:#ededed;"></div>
<div class="r" style="left:128px;top:972px;width:267px;height:1px;background:#f0d9d9;"></div>
<div id="t62" class="t" style="left:61px;top:923.67px;font-size:26px;line-height:26px;color:#111;font-weight:400;transform:scaleX(1.02);transform-origin:0 0;">7</div>
<div style="position:absolute;left:128px;top:903.67px;width:215px;height:66px;overflow:hidden"><div id="t63" class="t" style="left:48px;top:20px;font-size:26px;line-height:26px;color:#2a1b1b;font-weight:400;transform:scaleX(0.95);transform-origin:0 0;">Boot Milkeham</div></div>
<div style="position:absolute;left:392px;top:903.67px;width:353px;height:66px;overflow:hidden"><div id="t64" class="t" style="left:57.39999999999998px;top:20px;font-size:26px;line-height:26px;color:#111;font-weight:400;transform:scaleX(0.95);transform-origin:0 0;">bmilkeham6@foxnews_co</div></div>
<div id="t65" class="t" style="left:812.9px;top:923.67px;font-size:26px;line-height:26px;color:#111;font-weight:400;transform:scaleX(0.95);transform-origin:0 0;">false</div>
<div id="t66" class="t" style="left:1051.8px;top:923.67px;font-size:26px;line-height:26px;color:#111;font-weight:400;transform:scaleX(0.95);transform-origin:0 0;">Indigo</div>
<div id="t67" class="t" style="left:1308.5px;top:923.67px;font-size:26px;line-height:26px;color:#111;font-weight:400;transform:scaleX(0.99);transform-origin:0 0;">30-(380)416-4740</div>
<div style="position:absolute;left:1592px;top:903.67px;width:230px;height:66px;overflow:hidden"><div id="t68" class="t" style="left:120.29999999999995px;top:20px;font-size:26px;line-height:26px;color:#111;font-weight:400;transform:scaleX(1.06);transform-origin:0 0;">19/10/2k15</div></div>
<div class="r" style="left:14px;top:1040px;width:1808px;height:1px;background:#ededed;"></div>
<div class="r" style="left:128px;top:1040px;width:267px;height:1px;background:#f0d9d9;"></div>
<div id="t69" class="t" style="left:61px;top:991.10px;font-size:26px;line-height:26px;color:#111;font-weight:400;transform:scaleX(1.02);transform-origin:0 0;">8</div>
<div style="position:absolute;left:128px;top:971.10px;width:215px;height:66px;overflow:hidden"><div id="t70" class="t" style="left:48px;top:20px;font-size:26px;line-height:26px;color:#2a1b1b;font-weight:400;transform:scaleX(0.95);transform-origin:0 0;">Em Vales</div></div>
<div style="position:absolute;left:392px;top:971.10px;width:353px;height:66px;overflow:hidden"><div id="t71" class="t" style="left:57.39999999999998px;top:20px;font-size:26px;line-height:26px;color:#111;font-weight:400;transform:scaleX(0.95);transform-origin:0 0;">evales7@1688.com</div></div>
<div id="t72" class="t" style="left:812.9px;top:991.10px;font-size:26px;line-height:26px;color:#111;font-weight:400;transform:scaleX(0.95);transform-origin:0 0;">N</div>
<div id="t73" class="t" style="left:1051.8px;top:991.10px;font-size:26px;line-height:26px;color:#111;font-weight:400;transform:scaleX(0.95);transform-origin:0 0;">Crimson</div>
<div id="t74" class="t" style="left:1308.5px;top:991.10px;font-size:26px;line-height:26px;color:#111;font-weight:400;transform:scaleX(0.99);transform-origin:0 0;">385-(670)215-8636</div>
<div style="position:absolute;left:1592px;top:971.10px;width:230px;height:66px;overflow:hidden"><div id="t75" class="t" style="left:112px;top:20px;font-size:26px;line-height:26px;color:#111;font-weight:400;transform:scaleX(1.06);transform-origin:0 0;">26/02/2015</div></div>
<div class="r" style="left:14px;top:1107px;width:1808px;height:1px;background:#ededed;"></div>
<div class="r" style="left:128px;top:1107px;width:267px;height:1px;background:#f0d9d9;"></div>
<div id="t76" class="t" style="left:61px;top:1058.53px;font-size:26px;line-height:26px;color:#111;font-weight:400;transform:scaleX(1.02);transform-origin:0 0;">9</div>
<div style="position:absolute;left:128px;top:1038.53px;width:215px;height:66px;overflow:hidden"><div id="t77" class="t" style="left:48px;top:20px;font-size:26px;line-height:26px;color:#2a1b1b;font-weight:400;transform:scaleX(0.95);transform-origin:0 0;">Abey Swett</div></div>
<div style="position:absolute;left:392px;top:1038.53px;width:353px;height:66px;overflow:hidden"><div id="t78" class="t" style="left:59px;top:20px;font-size:26px;line-height:26px;color:#111;font-weight:400;transform:scaleX(0.95);transform-origin:0 0;">aswett8@domainmark.com</div></div>
<div id="t79" class="t" style="left:812.9px;top:1058.53px;font-size:26px;line-height:26px;color:#111;font-weight:400;transform:scaleX(0.95);transform-origin:0 0;">true</div>
<div id="t80" class="t" style="left:1051.8px;top:1058.53px;font-size:26px;line-height:26px;color:#111;font-weight:400;transform:scaleX(0.95);transform-origin:0 0;">Blue</div>
<div id="t81" class="t" style="left:1308.5px;top:1058.53px;font-size:26px;line-height:26px;color:#111;font-weight:400;transform:scaleX(0.99);transform-origin:0 0;">48-(252)826-4941</div>
<div style="position:absolute;left:1592px;top:1038.53px;width:230px;height:66px;overflow:hidden"><div id="t82" class="t" style="left:112px;top:20px;font-size:26px;line-height:26px;color:#111;font-weight:400;transform:scaleX(1.06);transform-origin:0 0;">25/05/2015</div></div>
<div class="r" style="left:14px;top:1175px;width:1808px;height:1px;background:#ededed;"></div>
<div class="r" style="left:128px;top:1175px;width:267px;height:1px;background:#f0d9d9;"></div>
<div id="t83" class="t" style="left:61px;top:1125.96px;font-size:26px;line-height:26px;color:#111;font-weight:400;transform:scaleX(1.02);transform-origin:0 0;">10</div>
<div style="position:absolute;left:128px;top:1105.96px;width:215px;height:66px;overflow:hidden"><div id="t84" class="t" style="left:48px;top:20px;font-size:26px;line-height:26px;color:#2a1b1b;font-weight:400;transform:scaleX(0.95);transform-origin:0 0;">Willdon Head</div></div>
<div style="position:absolute;left:392px;top:1105.96px;width:353px;height:66px;overflow:hidden"><div id="t85" class="t" style="left:57.39999999999998px;top:20px;font-size:26px;line-height:26px;color:#111;font-weight:400;transform:scaleX(0.95);transform-origin:0 0;">whead9@nasa@gov</div></div>
<div id="t86" class="t" style="left:812.9px;top:1125.96px;font-size:26px;line-height:26px;color:#111;font-weight:400;transform:scaleX(0.95);transform-origin:0 0;">true</div>
<div id="t87" class="t" style="left:1051.8px;top:1125.96px;font-size:26px;line-height:26px;color:#111;font-weight:400;transform:scaleX(0.95);transform-origin:0 0;">Teal</div>
<div id="t88" class="t" style="left:1308.5px;top:1125.96px;font-size:26px;line-height:26px;color:#111;font-weight:400;transform:scaleX(0.99);transform-origin:0 0;">46-(830)934-3885</div>
<div style="position:absolute;left:1592px;top:1105.96px;width:230px;height:66px;overflow:hidden"><div id="t89" class="t" style="left:112px;top:20px;font-size:26px;line-height:26px;color:#111;font-weight:400;transform:scaleX(1.06);transform-origin:0 0;">29/02/2015</div></div>
<div class="r" style="left:14px;top:1242px;width:1808px;height:1px;background:#ededed;"></div>
<div class="r" style="left:128px;top:1242px;width:267px;height:1px;background:#f0d9d9;"></div>
<div id="t90" class="t" style="left:61px;top:1193.39px;font-size:26px;line-height:26px;color:#111;font-weight:400;transform:scaleX(1.02);transform-origin:0 0;">11</div>
<div style="position:absolute;left:128px;top:1173.39px;width:215px;height:66px;overflow:hidden"><div id="t91" class="t" style="left:48px;top:20px;font-size:26px;line-height:26px;color:#2a1b1b;font-weight:400;transform:scaleX(0.95);transform-origin:0 0;">Fredericka Madge</div></div>
<div style="position:absolute;left:392px;top:1173.39px;width:353px;height:66px;overflow:hidden"><div id="t92" class="t" style="left:57.39999999999998px;top:20px;font-size:26px;line-height:26px;color:#111;font-weight:400;transform:scaleX(0.95);transform-origin:0 0;">fmadgea@alexa.com</div></div>
<div id="t93" class="t" style="left:812.9px;top:1193.39px;font-size:26px;line-height:26px;color:#111;font-weight:400;transform:scaleX(0.95);transform-origin:0 0;">true</div>
<div id="t94" class="t" style="left:1051.8px;top:1193.39px;font-size:26px;line-height:26px;color:#111;font-weight:400;transform:scaleX(0.95);transform-origin:0 0;">Aquamarine</div>
<div id="t95" class="t" style="left:1308.5px;top:1193.39px;font-size:26px;line-height:26px;color:#111;font-weight:400;transform:scaleX(0.99);transform-origin:0 0;">86-(557)702-8306</div>
<div style="position:absolute;left:1592px;top:1173.39px;width:230px;height:66px;overflow:hidden"><div id="t96" class="t" style="left:119px;top:20px;font-size:26px;line-height:26px;color:#111;font-weight:400;transform:scaleX(1.06);transform-origin:0 0;">22/11/2015</div></div>
<div class="r" style="left:14px;top:1309px;width:1808px;height:1px;background:#ededed;"></div>
<div class="r" style="left:128px;top:1309px;width:267px;height:1px;background:#f0d9d9;"></div>
<div id="t97" class="t" style="left:61px;top:1260.82px;font-size:26px;line-height:26px;color:#111;font-weight:400;transform:scaleX(1.02);transform-origin:0 0;">12</div>
<div style="position:absolute;left:128px;top:1240.82px;width:215px;height:66px;overflow:hidden"><div id="t98" class="t" style="left:48px;top:20px;font-size:26px;line-height:26px;color:#2a1b1b;font-weight:400;transform:scaleX(0.95);transform-origin:0 0;">Dorette Resun</div></div>
<div style="position:absolute;left:392px;top:1240.82px;width:353px;height:66px;overflow:hidden"><div id="t99" class="t" style="left:57.39999999999998px;top:20px;font-size:26px;line-height:26px;color:#111;font-weight:400;transform:scaleX(0.95);transform-origin:0 0;">dresunb@nbcnews.com</div></div>
<div id="t100" class="t" style="left:812.9px;top:1260.82px;font-size:26px;line-height:26px;color:#111;font-weight:400;transform:scaleX(0.95);transform-origin:0 0;">true</div>
<div id="t101" class="t" style="left:1051.8px;top:1260.82px;font-size:26px;line-height:26px;color:#111;font-weight:400;transform:scaleX(0.95);transform-origin:0 0;">Blue</div>
<div id="t102" class="t" style="left:1308.5px;top:1260.82px;font-size:26px;line-height:26px;color:#111;font-weight:400;transform:scaleX(0.99);transform-origin:0 0;">970-(578)333-6484</div>
<div style="position:absolute;left:1592px;top:1240.82px;width:230px;height:66px;overflow:hidden"><div id="t103" class="t" style="left:115px;top:20px;font-size:26px;line-height:26px;color:#111;font-weight:400;transform:scaleX(1.06);transform-origin:0 0;">25/01/2015</div></div>
<div class="r" style="left:14px;top:1377px;width:1808px;height:1px;background:#ededed;"></div>
<div class="r" style="left:128px;top:1377px;width:267px;height:1px;background:#f0d9d9;"></div>
<div id="t104" class="t" style="left:61px;top:1328.25px;font-size:26px;line-height:26px;color:#111;font-weight:400;transform:scaleX(1.02);transform-origin:0 0;">13</div>
<div style="position:absolute;left:128px;top:1308.25px;width:215px;height:66px;overflow:hidden"><div id="t105" class="t" style="left:48px;top:20px;font-size:26px;line-height:26px;color:#2a1b1b;font-weight:400;transform:scaleX(0.95);transform-origin:0 0;">Lula McGrey</div></div>
<div style="position:absolute;left:392px;top:1308.25px;width:353px;height:66px;overflow:hidden"><div id="t106" class="t" style="left:57.39999999999998px;top:20px;font-size:26px;line-height:26px;color:#111;font-weight:400;transform:scaleX(0.95);transform-origin:0 0;">lmcgreyc@so-net.ne.jp</div></div>
<div id="t107" class="t" style="left:812.9px;top:1328.25px;font-size:26px;line-height:26px;color:#111;font-weight:400;transform:scaleX(0.95);transform-origin:0 0;">y</div>
<div id="t108" class="t" style="left:1051.8px;top:1328.25px;font-size:26px;line-height:26px;color:#111;font-weight:400;transform:scaleX(0.95);transform-origin:0 0;">Pink</div>
<div id="t109" class="t" style="left:1308.5px;top:1328.25px;font-size:26px;line-height:26px;color:#111;font-weight:400;transform:scaleX(0.99);transform-origin:0 0;">420-(577)690-6732</div>
<div style="position:absolute;left:1592px;top:1308.25px;width:230px;height:66px;overflow:hidden"><div id="t110" class="t" style="left:112px;top:20px;font-size:26px;line-height:26px;color:#111;font-weight:400;transform:scaleX(1.06);transform-origin:0 0;">08/06/2015</div></div>
<div class="r" style="left:14px;top:1444px;width:1808px;height:1px;background:#ededed;"></div>
<div class="r" style="left:128px;top:1444px;width:267px;height:1px;background:#f0d9d9;"></div>
<div id="t111" class="t" style="left:61px;top:1395.68px;font-size:26px;line-height:26px;color:#111;font-weight:400;transform:scaleX(1.02);transform-origin:0 0;">14</div>
<div style="position:absolute;left:128px;top:1375.68px;width:215px;height:66px;overflow:hidden"><div id="t112" class="t" style="left:48px;top:20px;font-size:26px;line-height:26px;color:#2a1b1b;font-weight:400;transform:scaleX(0.95);transform-origin:0 0;">Jodi Janikowski</div></div>
<div style="position:absolute;left:392px;top:1375.68px;width:353px;height:66px;overflow:hidden"><div id="t113" class="t" style="left:57.39999999999998px;top:20px;font-size:26px;line-height:26px;color:#111;font-weight:400;transform:scaleX(0.95);transform-origin:0 0;">jjanikowskid@bbc.co.uk</div></div>
<div id="t114" class="t" style="left:812.9px;top:1395.68px;font-size:26px;line-height:26px;color:#111;font-weight:400;transform:scaleX(0.95);transform-origin:0 0;">true</div>
<div id="t115" class="t" style="left:1051.8px;top:1395.68px;font-size:26px;line-height:26px;color:#111;font-weight:400;transform:scaleX(0.95);transform-origin:0 0;">Purple</div>
<div id="t116" class="t" style="left:1308.5px;top:1395.68px;font-size:26px;line-height:26px;color:#111;font-weight:400;transform:scaleX(0.99);transform-origin:0 0;">7-(784)587-1439</div>
<div style="position:absolute;left:1592px;top:1375.68px;width:230px;height:66px;overflow:hidden"><div id="t117" class="t" style="left:115px;top:20px;font-size:26px;line-height:26px;color:#111;font-weight:400;transform:scaleX(1.06);transform-origin:0 0;">01/04/2015</div></div>
<div class="r" style="left:712px;top:1040px;width:40px;height:67px;background:linear-gradient(90deg,rgba(255,255,255,0),#fff 85%);"></div>
<div class="r" style="left:1594px;top:839.5px;width:8px;height:66.4px;background:#e6877a;"></div>
<div class="r" style="left:1822px;top:97px;width:978px;height:1331px;background:#fff;box-shadow:-1px 0 3px rgba(0,0,0,0.10);border-left:1.2px solid #cfcfcf;box-sizing:border-box;"></div>
<div class="r" style="left:1823px;top:203px;width:968px;height:2px;background:#e6e6e6;"></div>
<div class="r" style="left:2791px;top:97px;width:1px;height:1331px;background:#ececec;"></div>
<svg style="left:0;top:0" width="2800" height="400"><defs>
<linearGradient id="zg" x1="0" y1="0" x2="0" y2="1"><stop offset="0" stop-color="#5195e6"/><stop offset="0.3" stop-color="#6aa2ee"/><stop offset="0.6" stop-color="#82a8f2"/><stop offset="0.82" stop-color="#8893f0"/><stop offset="1" stop-color="#8790f0"/></linearGradient>
<filter id="sh" x="-30%" y="-30%" width="160%" height="170%"><feDropShadow dx="0" dy="4" stdDeviation="4" flood-color="#303850" flood-opacity="0.16"/></filter></defs>
<rect x="1856.4" y="123.9" width="61.4" height="62" rx="19" fill="url(#zg)" filter="url(#sh)"/>
<g transform="translate(1887.1 154.9) scale(0.541) translate(-2306.85 -302.7)">
<path d="M2274.6 286.1 H2287.9 Q2291.7 286.1 2289.5 289.9 L2275.2 317 Q2273 323.4 2279.4 323.4 H2297.5 Q2301.8 323.4 2303.9 320.2 L2321 294.7 Q2324.2 291.5 2327.4 295.7 L2333.8 317 Q2334.8 323.4 2328.4 321.3 L2300.7 310.1 Q2296.5 308.5 2298.6 304.3 L2305.5 293.1" fill="none" stroke="#fff" stroke-width="3.9" stroke-linecap="round" stroke-linejoin="round"/>
<circle cx="2311.9" cy="283.5" r="3.7" fill="#fff"/>
<text x="2318.5" y="287.4" font-family="Liberation Sans" font-weight="700" font-size="10.5" fill="#fff">GPT</text></g>
</svg>
<div id="t118" class="t" style="left:1936px;top:136.33px;font-size:38px;line-height:38px;color:#0a0a0a;font-weight:400;transform:scaleX(0.9787);transform-origin:0 0;-webkit-text-stroke:0.4px #0a0a0a;">Ask Zia</div>
<svg style="left:0;top:0" width="2800" height="400"><g stroke="#111" stroke-width="2.6" stroke-linecap="round"><path d="M2728.5 139.5 L2751 162"/><path d="M2751 139.5 L2728.5 162"/></g></svg>
<svg style="left:0;top:0" width="2800" height="700"><defs>
<linearGradient id="bg2" x1="0" y1="0" x2="0" y2="1"><stop offset="0" stop-color="#e9f1fb"/><stop offset="1" stop-color="#f1f0fc"/></linearGradient>
<linearGradient id="zg2" x1="0" y1="0" x2="0" y2="1"><stop offset="0" stop-color="#4d95e7"/><stop offset="0.5" stop-color="#76a6ef"/><stop offset="1" stop-color="#898ff2"/></linearGradient>
<filter id="sh2" x="-30%" y="-30%" width="160%" height="170%"><feDropShadow dx="0" dy="8" stdDeviation="8" flood-color="#3050a0" flood-opacity="0.18"/></filter></defs>
<path d="M2240 300 L2470 341 L2390 510 Q2345 590 2275 580 Q2190 565 2187 480 Q2186 440 2200 405 Z" fill="url(#bg2)"/>
<rect x="2250.1" y="245.7" width="113.5" height="114" rx="31" fill="url(#zg)" filter="url(#sh2)"/>
<path d="M2274.6 286.1 H2287.9 Q2291.7 286.1 2289.5 289.9 L2275.2 317 Q2273 323.4 2279.4 323.4 H2297.5 Q2301.8 323.4 2303.9 320.2 L2321 294.7 Q2324.2 291.5 2327.4 295.7 L2333.8 317 Q2334.8 323.4 2328.4 321.3 L2300.7 310.1 Q2296.5 308.5 2298.6 304.3 L2305.5 293.1" fill="none" stroke="#fff" stroke-width="3.9" stroke-linecap="round" stroke-linejoin="round"/>
<circle cx="2311.9" cy="283.5" r="3.7" fill="#fff"/>
<text x="2318.5" y="287.4" font-family="Liberation Sans" font-weight="700" font-size="10.5" fill="#fff">GPT</text>
</svg>
<div id="t119" class="t" style="left:2139.5px;top:380.68px;font-size:37px;line-height:37px;color:#0a0a0a;font-weight:400;transform:scaleX(1.0482);transform-origin:0 0;-webkit-text-stroke:0.4px #0a0a0a;">Welcome to Ask Zia</div>
<div id="t120" class="t" style="left:2042.5px;top:446.02px;font-size:27.5px;line-height:27.5px;color:#666;font-weight:400;transform:scaleX(1.0081);transform-origin:0 0;">Your everyday AI Companion to Clean and</div>
<div id="t121" class="t" style="left:2055px;top:481.02px;font-size:27.5px;line-height:27.5px;color:#666;font-weight:400;transform:scaleX(1.0087);transform-origin:0 0;">Transform your data in Natural language</div>
<svg style="left:0;top:0" width="2800" height="700"><path d="M2150 578 H2467" stroke="#9a9a9a" stroke-width="1.5" stroke-dasharray="5 6.3"/></svg>
<div class="r" style="left:1879.6px;top:658.5px;width:853.4px;height:513.5px;background:#f4f4f4;border-radius:40px;"></div>
<div id="t122" class="t" style="left:1915px;top:691.94px;font-size:27px;line-height:27px;color:#1a1a1a;font-weight:400;transform:scaleX(0.9678);transform-origin:0 0;">Try our sample suggestions</div>
<svg style="left:0;top:0" width="2800" height="800"><circle cx="2252.6" cy="706.8" r="9.9" fill="none" stroke="#111" stroke-width="1.5"/>
<path d="M2249.6 703.8 Q2249.8 701.3 2252.7 701.3 Q2255.8 701.3 2255.8 703.8 Q2255.8 705.8 2253.8 707 Q2252.7 707.8 2252.7 709.5" fill="none" stroke="#111" stroke-width="1.5" stroke-linecap="round"/><circle cx="2252.7" cy="712.2" r="1.1" fill="#111"/></svg>
<div class="r" style="left:1916.6px;top:772.3px;width:780.7px;height:66.8px;background:#fff;border-radius:10px;"></div>
<div class="r" style="left:1926.9px;top:788.0px;width:48.1px;height:37.4px;background:#fdf0e1;border-radius:14px;"></div>
<svg style="left:0;top:0" width="2800" height="1428"><g fill="none" stroke="#e26c59" stroke-width="1.4" stroke-linecap="round" stroke-linejoin="round">
<path d="M1945.8 816.0 L1945.3 812.5 Q1942.6 810.0 1942.6 806.7 A7.4 7.4 0 1 1 1957.4 806.7 Q1957.4 810.0 1954.7 812.5 L1954.2 816.0 Z"/>
<path d="M1947.3 818.9 H1953.4"/><path d="M1949.8 792.1 V795.5"/><path d="M1940.7 796.0 L1942.8 798.0"/><path d="M1959.5 795.8 L1957 798.2"/><path d="M1950 810.5 V815.5" stroke-width="1"/></g></svg>
<div id="t123" class="t" style="left:1996.7px;top:794.27px;font-size:26.5px;line-height:26.5px;color:#383838;font-weight:400;transform:scaleX(0.9387);transform-origin:0 0;">Remove all duplicate rows from the dataset</div>
<div class="r" style="left:1916.6px;top:881.6px;width:780.7px;height:66.8px;background:#fff;border-radius:10px;"></div>
<div class="r" style="left:1926.9px;top:897.3000000000001px;width:48.1px;height:37.4px;background:#fdf0e1;border-radius:14px;"></div>
<svg style="left:0;top:0" width="2800" height="1428"><g fill="none" stroke="#e26c59" stroke-width="1.4" stroke-linecap="round" stroke-linejoin="round">
<path d="M1945.8 925.3000000000001 L1945.3 921.8000000000001 Q1942.6 919.3000000000001 1942.6 916.0000000000001 A7.4 7.4 0 1 1 1957.4 916.0000000000001 Q1957.4 919.3000000000001 1954.7 921.8000000000001 L1954.2 925.3000000000001 Z"/>
<path d="M1947.3 928.2 H1953.4"/><path d="M1949.8 901.4000000000001 V904.8000000000001"/><path d="M1940.7 905.3000000000001 L1942.8 907.3000000000001"/><path d="M1959.5 905.1 L1957 907.5000000000001"/><path d="M1950 919.8000000000001 V924.8000000000001" stroke-width="1"/></g></svg>
<div id="t124" class="t" style="left:1996.7px;top:903.57px;font-size:26.5px;line-height:26.5px;color:#383838;font-weight:400;transform:scaleX(0.9458);transform-origin:0 0;">Identify all null values and replace them with ‘Unknown’</div>
<div class="r" style="left:1916.6px;top:978px;width:780.7px;height:66.8px;background:#fff;border-radius:10px;"></div>
<div class="r" style="left:1926.9px;top:993.7px;width:48.1px;height:37.4px;background:#fdf0e1;border-radius:14px;"></div>
<svg style="left:0;top:0" width="2800" height="1428"><g fill="none" stroke="#e26c59" stroke-width="1.4" stroke-linecap="round" stroke-linejoin="round">
<path d="M1945.8 1021.7 L1945.3 1018.2 Q1942.6 1015.7 1942.6 1012.4000000000001 A7.4 7.4 0 1 1 1957.4 1012.4000000000001 Q1957.4 1015.7 1954.7 1018.2 L1954.2 1021.7 Z"/>
<path d="M1947.3 1024.6000000000001 H1953.4"/><path d="M1949.8 997.8000000000001 V1001.2"/><path d="M1940.7 1001.7 L1942.8 1003.7"/><path d="M1959.5 1001.5 L1957 1003.9000000000001"/><path d="M1950 1016.2 V1021.2" stroke-width="1"/></g></svg>
<div id="t125" class="t" style="left:1996.7px;top:999.97px;font-size:26.5px;line-height:26.5px;color:#383838;font-weight:400;transform:scaleX(0.9458);transform-origin:0 0;">Identify all null values and replace them with ‘Unknown’</div>
<div class="r" style="left:1916.6px;top:1076.8px;width:780.7px;height:66.8px;background:#fff;border-radius:10px;"></div>
<div class="r" style="left:1926.9px;top:1092.5px;width:48.1px;height:37.4px;background:#fdf0e1;border-radius:14px;"></div>
<svg style="left:0;top:0" width="2800" height="1428"><g fill="none" stroke="#e26c59" stroke-width="1.4" stroke-linecap="round" stroke-linejoin="round">
<path d="M1945.8 1120.5 L1945.3 1117.0 Q1942.6 1114.5 1942.6 1111.2 A7.4 7.4 0 1 1 1957.4 1111.2 Q1957.4 1114.5 1954.7 1117.0 L1954.2 1120.5 Z"/>
<path d="M1947.3 1123.4 H1953.4"/><path d="M1949.8 1096.6 V1100.0"/><path d="M1940.7 1100.5 L1942.8 1102.5"/><path d="M1959.5 1100.3 L1957 1102.7"/><path d="M1950 1115.0 V1120.0" stroke-width="1"/></g></svg>
<div id="t126" class="t" style="left:1996.7px;top:1098.77px;font-size:26.5px;line-height:26.5px;color:#383838;font-weight:400;transform:scaleX(0.9304);transform-origin:0 0;">Round all decimal values to the nearest integer</div>
<div class="r" style="left:1857.5px;top:1231px;width:901.5px;height:173px;background:#fff;border:2px solid #519cf0;border-radius:22px;box-sizing:border-box;box-shadow:0 8px 20px rgba(0,0,0,0.08);"></div>
<svg style="left:0;top:0" width="2800" height="1428">
<g stroke-width="7" stroke-linecap="round"><path d="M1881.6 1287.9 L1894.8 1271.2" stroke="#74adf0"/><path d="M1895.2 1270.7 L1898.6 1266.5" stroke="#4a89d0"/></g><path d="M1902.9 1248.0 Q1904.188 1251.312 1907.5 1252.6 Q1904.188 1253.888 1902.9 1257.1999999999998 Q1901.612 1253.888 1898.3000000000002 1252.6 Q1901.612 1251.312 1902.9 1248.0 Z" fill="#6aa8ee"/><path d="M1886.9 1256.8 Q1887.74 1258.96 1889.9 1259.8 Q1887.74 1260.6399999999999 1886.9 1262.8 Q1886.0600000000002 1260.6399999999999 1883.9 1259.8 Q1886.0600000000002 1258.96 1886.9 1256.8 Z" fill="#6aa8ee"/><path d="M1913 1267.7 Q1913.84 1269.8600000000001 1916.0 1270.7 Q1913.84 1271.54 1913 1273.7 Q1912.16 1271.54 1910.0 1270.7 Q1912.16 1269.8600000000001 1913 1267.7 Z" fill="#6aa8ee"/>
</svg>
<div id="t127" class="t" style="left:1942.6px;top:1257.30px;font-size:34.5px;line-height:34.5px;color:#0b1a14;font-weight:400;transform:scaleX(0.9781);transform-origin:0 0;-webkit-text-stroke:0.3px #0b1a14;">Need to split the full name column into two</div>
<div id="t128" class="t" style="left:1942.6px;top:1302.80px;font-size:34.5px;line-height:34.5px;color:#0b1a14;font-weight:400;transform:scaleX(0.9384);transform-origin:0 0;-webkit-text-stroke:0.3px #0b1a14;">separate column as first name and last name</div>
<div class="r" style="left:2659.8px;top:1271.4px;width:68.2px;height:66.6px;background:#5aa5f5;border-radius:17px;box-shadow:0 4px 8px rgba(40,90,160,0.18);"></div>
<svg style="left:0;top:0" width="2800" height="1428"><g fill="none" stroke="#fff" stroke-width="2.6" stroke-linejoin="round" stroke-linecap="round">
<path d="M2679 1304 L2709 1294 L2694 1318 L2690 1308 Z"/><path d="M2690 1308 L2709 1294"/></g></svg>
</body></html>
